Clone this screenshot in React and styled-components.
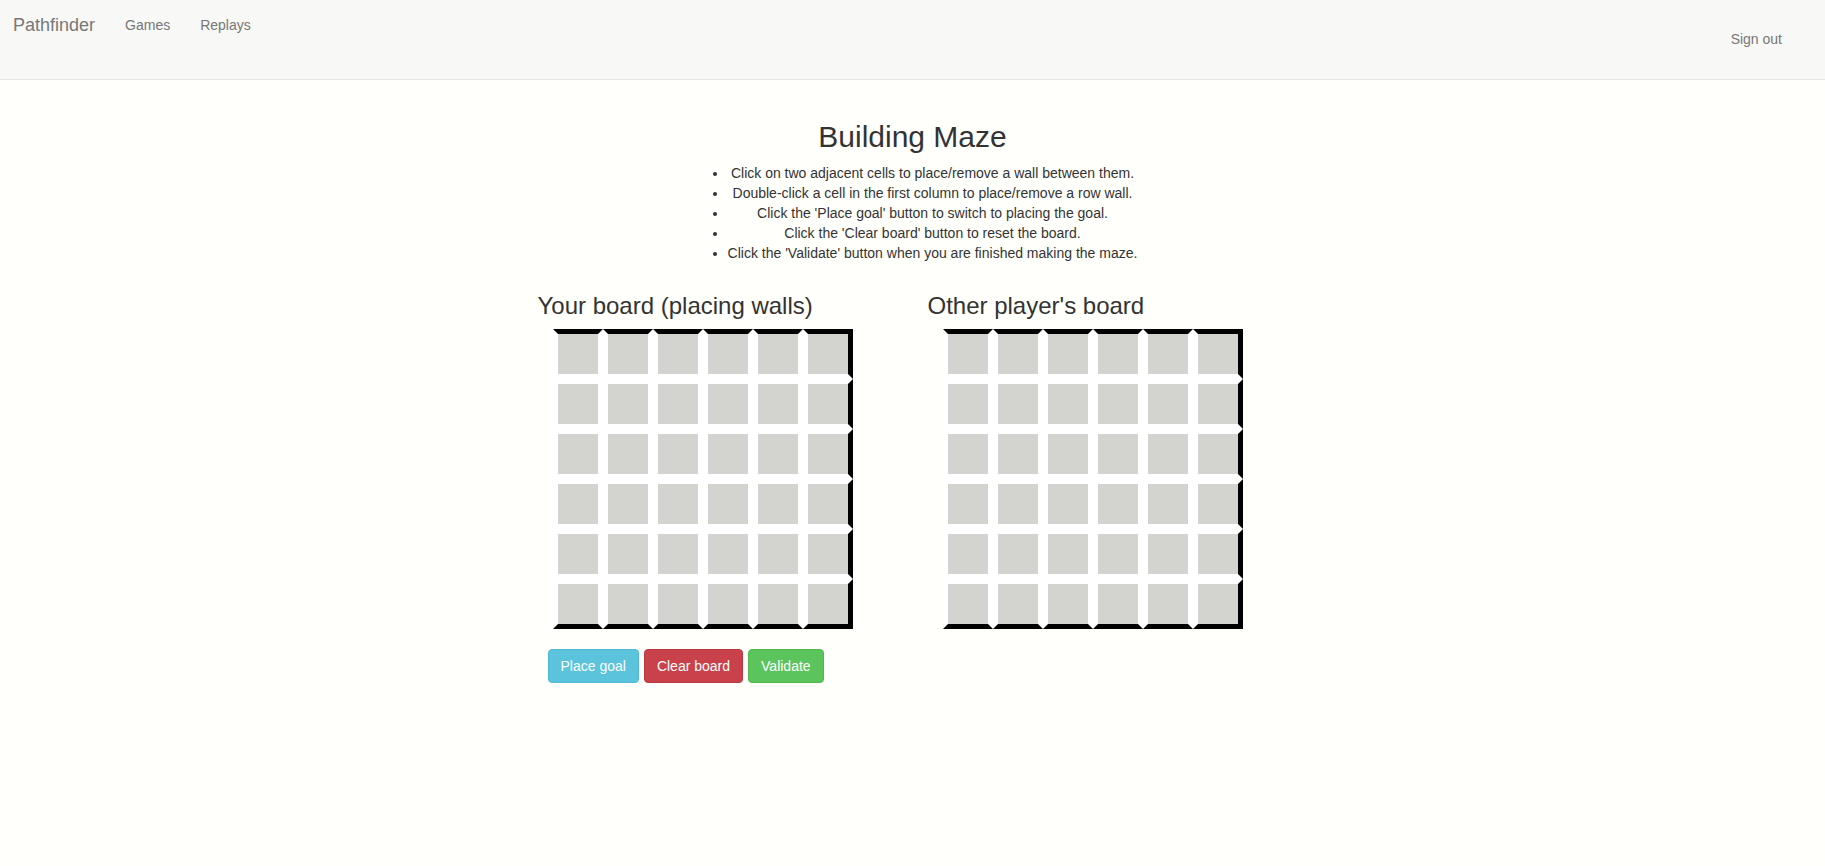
import React from "react"
import styled, { createGlobalStyle } from "styled-components"

const GlobalStyle = createGlobalStyle`
  body {
    margin: 0;
    background: #fffffc;
    font-family: "Liberation Sans", Arial, sans-serif;
    font-size: 14px;
    line-height: 1.42857;
    color: #333;
  }
  * {
    box-sizing: border-box;
  }
`

const Navbar = styled.nav`
  display: flex;
  align-items: flex-start;
  height: 80px;
  padding: 0 15px;
  background: #f8f8f6;
  border-bottom: 1px solid #e7e7e7;
`

const Brand = styled.a`
  margin-left: -2px;
  padding: 15px 15px 15px 0;
  font-size: 18px;
  line-height: 20px;
  color: #777;
`

const NavLink = styled.a`
  padding: 15px;
  line-height: 20px;
  color: #777;
`

const SignOut = styled(NavLink)`
  margin-left: auto;
  padding: 29px 28px 0 15px;
`

const Main = styled.main`
  padding-top: 20px;
`

const Title = styled.h2`
  margin: 20px 0 10px;
  font-size: 30px;
  font-weight: 500;
  line-height: 1.1;
  text-align: center;
`

const Instructions = styled.div`
  text-align: center;

  ul {
    display: inline-block;
    margin: 0 0 10px;
    padding-left: 40px;
    line-height: 20px;
  }
`

const BoardsRow = styled.div`
  display: flex;
  width: 780px;
  margin: 0 auto;
`

const Column = styled.section`
  width: 390px;
  padding: 0 15px;
`

const BoardTitle = styled.h3`
  margin: 20px 0 10px;
  font-size: 24px;
  font-weight: 500;
  line-height: 1.1;
`

const Board = styled.div`
  display: grid;
  grid-template-columns: repeat(6, 50px);
  grid-auto-rows: 50px;
  margin-left: 15px;
`

const Cell = styled.div`
  background: #d3d3cf;
  border: 5px solid #fff;
  border-top-color: ${(p) => (p.$top ? "#000" : "#fff")};
  border-right-color: ${(p) => (p.$right ? "#000" : "#fff")};
  border-bottom-color: ${(p) => (p.$bottom ? "#000" : "#fff")};
`

const Actions = styled.div`
  display: flex;
  gap: 5px;
  margin: 20px 0 0 10px;
`

const Button = styled.button`
  padding: 6px 12px;
  font-family: inherit;
  font-size: 14px;
  line-height: 20px;
  color: #fff;
  background: ${(p) => p.$bg};
  border: 1px solid ${(p) => p.$border};
  border-radius: 4px;
  cursor: pointer;
`

const SIZE = 6

const MazeBoard = () => (
  <Board>
    {Array.from({ length: SIZE * SIZE }, (_, i) => {
      const row = Math.floor(i / SIZE)
      const col = i % SIZE
      return (
        <Cell
          key={i}
          $top={row === 0}
          $bottom={row === SIZE - 1}
          $right={col === SIZE - 1}
        />
      )
    })}
  </Board>
)

const App = () => {
  return (
    <>
      <GlobalStyle />
      <Navbar>
        <Brand>Pathfinder</Brand>
        <NavLink>Games</NavLink>
        <NavLink>Replays</NavLink>
        <SignOut>Sign out</SignOut>
      </Navbar>
      <Main>
        <Title>Building Maze</Title>
        <Instructions>
          <ul>
            <li>Click on two adjacent cells to place/remove a wall between them.</li>
            <li>Double-click a cell in the first column to place/remove a row wall.</li>
            <li>Click the 'Place goal' button to switch to placing the goal.</li>
            <li>Click the 'Clear board' button to reset the board.</li>
            <li>Click the 'Validate' button when you are finished making the maze.</li>
          </ul>
        </Instructions>
        <BoardsRow>
          <Column>
            <BoardTitle>Your board (placing walls)</BoardTitle>
            <MazeBoard />
            <Actions>
              <Button $bg="#5bc3dc" $border="#4fb8d4">Place goal</Button>
              <Button $bg="#c9424b" $border="#bd3640">Clear board</Button>
              <Button $bg="#5cc45c" $border="#4eb84e">Validate</Button>
            </Actions>
          </Column>
          <Column>
            <BoardTitle>Other player's board</BoardTitle>
            <MazeBoard />
          </Column>
        </BoardsRow>
      </Main>
    </>
  )
}

export default App
